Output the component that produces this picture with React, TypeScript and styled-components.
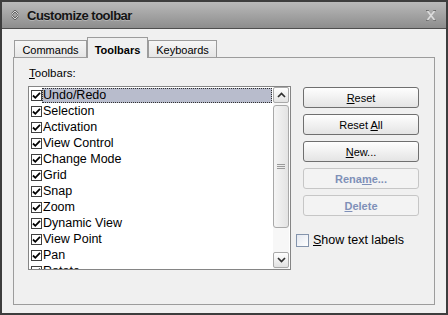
import styled, { createGlobalStyle } from "styled-components";

const GlobalStyle = createGlobalStyle`
  html, body {
    margin: 0;
    padding: 0;
    background: #f0f0f0;
  }
  body {
    font-family: "Liberation Sans", Arial, sans-serif;
    color: #000;
  }
`;

const toolbars = [
    "Undo/Redo",
    "Selection",
    "Activation",
    "View Control",
    "Change Mode",
    "Grid",
    "Snap",
    "Zoom",
    "Dynamic View",
    "View Point",
    "Pan",
    "Rotate",
];

const Window = styled.div`
    width: 448px;
    height: 315px;
    box-sizing: border-box;
    border: 2px solid #3d3d3d;
    background: #f0f0f0;
    display: flex;
    flex-direction: column;
    overflow: hidden;
`;

const TitleBar = styled.div`
    height: 26px;
    flex: none;
    display: flex;
    align-items: center;
    padding: 0 10px 0 9px;
    background: linear-gradient(#b9b9b9, #8d8d8d);
    border-bottom: 1px solid #4e4e4e;
`;

const Title = styled.span`
    flex: 1;
    margin-left: 8px;
    font-size: 13px;
    font-weight: bold;
    letter-spacing: -0.5px;
    color: #141414;
    text-shadow: 0 1px 0 rgba(255, 255, 255, 0.25);
`;

const Body = styled.div`
    flex: 1;
    display: flex;
    flex-direction: column;
    padding: 8px 11px 8px;
`;

const TabStrip = styled.div`
    height: 20px;
    display: flex;
    align-items: flex-end;
    padding-left: 1px;
`;

const Tab = styled.div<{ $active?: boolean; $width: number }>`
    width: ${(p) => p.$width}px;
    box-sizing: border-box;
    height: ${(p) => (p.$active ? 21 : 17)}px;
    margin-bottom: ${(p) => (p.$active ? -1 : 0)}px;
    position: relative;
    z-index: ${(p) => (p.$active ? 1 : 0)};
    border: 1px solid #9c9c9c;
    border-bottom: none;
    background: ${(p) =>
        p.$active ? "#f0f0f0" : "linear-gradient(#f6f6f6, #e6e6e6)"};
    font-size: 11px;
    font-weight: ${(p) => (p.$active ? "bold" : "normal")};
    display: flex;
    align-items: center;
    justify-content: center;
    padding-top: ${(p) => (p.$active ? 3 : 1)}px;
`;

const Panel = styled.div`
    flex: 1;
    border: 1px solid #9c9c9c;
    display: flex;
    align-items: flex-start;
    padding: 8px 0 0 14px;
`;

const LeftCol = styled.div`
    width: 263px;
    display: flex;
    flex-direction: column;
`;

const FieldLabel = styled.div`
    height: 14px;
    line-height: 14px;
    margin-left: 1px;
    font-size: 11.5px;
`;

const ListBox = styled.div`
    margin-top: 6px;
    height: 184px;
    box-sizing: border-box;
    border: 1px solid #858585;
    background: #fff;
    display: flex;
`;

const Items = styled.div`
    flex: 1;
    overflow: hidden;
    margin-right: 1px;
`;

const Row = styled.div`
    height: 16px;
    display: flex;
    align-items: center;
    padding-left: 2px;
    font-size: 12.5px;
`;

const ItemCheck = styled.span`
    width: 11px;
    height: 11px;
    box-sizing: border-box;
    border: 1px solid #404040;
    background: #fff;
    flex: none;
    display: flex;
    align-items: center;
    justify-content: center;
`;

const ItemText = styled.span<{ $selected?: boolean }>`
    height: 15px;
    line-height: 15px;
    box-sizing: border-box;
    padding-left: 1px;
    ${(p) =>
        p.$selected &&
        `
        flex: 1;
        background: #b8bccc;
        outline: 1px dotted #303030;
        outline-offset: -1px;
    `}
`;

const ScrollBar = styled.div`
    width: 16px;
    flex: none;
    margin-right: 1px;
    padding: 0 0 1px;
    display: flex;
    flex-direction: column;
    background: #f7f7f7;
`;

const ScrollButton = styled.div`
    height: 16px;
    box-sizing: border-box;
    border: 1px solid #a9a9a9;
    border-radius: 2px;
    background: linear-gradient(#ffffff, #e2e2e2);
    display: flex;
    align-items: center;
    justify-content: center;
`;

const Thumb = styled.div`
    margin-top: 2px;
    height: 123px;
    box-sizing: border-box;
    border: 1px solid #a9a9a9;
    border-radius: 3px;
    background: linear-gradient(90deg, #f5f5f5, #e3e3e3);
    display: flex;
    align-items: center;
    justify-content: center;
`;

const Track = styled.div`
    flex: 1;
`;

const RightCol = styled.div`
    margin-left: 5px;
    padding-top: 21px;
    display: flex;
    flex-direction: column;
    gap: 6px;
`;

const Button = styled.div<{ $disabled?: boolean }>`
    margin-left: 7px;
    width: 116px;
    height: 21px;
    box-sizing: border-box;
    border: 1px solid ${(p) => (p.$disabled ? "#c6c6c6" : "#6f6f6f")};
    border-radius: 3px;
    background: ${(p) =>
        p.$disabled ? "#f3f3f3" : "linear-gradient(#fefefe, #e4e4e4)"};
    color: ${(p) => (p.$disabled ? "#7f90b8" : "#000")};
    font-size: 11px;
    font-weight: ${(p) => (p.$disabled ? "bold" : "normal")};
    display: flex;
    align-items: center;
    justify-content: center;
`;

const CheckRow = styled.label`
    margin-top: 11px;
    display: flex;
    align-items: center;
    gap: 4px;
    font-size: 12.5px;
`;

const Box = styled.span`
    width: 13px;
    height: 13px;
    box-sizing: border-box;
    border: 1px solid #8494ac;
    background: linear-gradient(135deg, #e4e8f0, #ffffff);
`;

function Check() {
    return (
        <svg width="9" height="9" viewBox="0 0 9 9">
            <path d="M1 4.5 L3.3 6.8 L8 1.8" fill="none" stroke="#000" strokeWidth="1.8" />
        </svg>
    );
}

function Chevron({ up }: { up?: boolean }) {
    return (
        <svg width="9" height="6" viewBox="0 0 9 6">
            <path
                d={up ? "M1 5 L4.5 1.5 L8 5" : "M1 1 L4.5 4.5 L8 1"}
                fill="none"
                stroke="#303030"
                strokeWidth="1.7"
            />
        </svg>
    );
}

function Grip() {
    return (
        <svg width="8" height="7" viewBox="0 0 8 7">
            <path d="M0 1.5 H8 M0 3.5 H8 M0 5.5 H8" stroke="#9a9a9a" strokeWidth="1" />
        </svg>
    );
}

function MenuIcon() {
    return (
        <svg width="8" height="10" viewBox="0 0 8 10">
            <path d="M1 4 L4 1 L7 4 M1 6 L4 9 L7 6" fill="none" stroke="#5a5a5a" strokeWidth="2" />
            <path d="M1 4 L4 1 L7 4 M1 6 L4 9 L7 6" fill="none" stroke="#e8e8e8" strokeWidth="0.9" />
        </svg>
    );
}

function CloseIcon() {
    return (
        <svg width="10" height="11" viewBox="0 0 10 11">
            <path d="M0 0.5 H3 M7 0.5 H10 M0 10.5 H3 M7 10.5 H10" stroke="#6e6e6e" strokeWidth="1" />
            <path d="M1.5 1 L8.5 10 M8.5 1 L1.5 10" stroke="#dcdcdc" strokeWidth="1.6" />
        </svg>
    );
}

function App() {
    return (
        <>
            <GlobalStyle />
            <Window>
                <TitleBar>
                    <MenuIcon />
                    <Title>Customize toolbar</Title>
                    <CloseIcon />
                </TitleBar>
                <Body>
                    <TabStrip>
                        <Tab $width={73}>Commands</Tab>
                        <Tab $width={61} $active>Toolbars</Tab>
                        <Tab $width={69}>Keyboards</Tab>
                    </TabStrip>
                    <Panel>
                        <LeftCol>
                            <FieldLabel>
                                <u>T</u>oolbars:
                            </FieldLabel>
                            <ListBox>
                                <Items>
                                    {toolbars.map((name, i) => (
                                        <Row key={name}>
                                            <ItemCheck>
                                                <Check />
                                            </ItemCheck>
                                            <ItemText $selected={i === 0}>{name}</ItemText>
                                        </Row>
                                    ))}
                                </Items>
                                <ScrollBar>
                                    <ScrollButton>
                                        <Chevron up />
                                    </ScrollButton>
                                    <Thumb>
                                        <Grip />
                                    </Thumb>
                                    <Track />
                                    <ScrollButton>
                                        <Chevron />
                                    </ScrollButton>
                                </ScrollBar>
                            </ListBox>
                        </LeftCol>
                        <RightCol>
                            <Button>
                                <span>
                                    <u>R</u>eset
                                </span>
                            </Button>
                            <Button>
                                <span>
                                    Reset <u>A</u>ll
                                </span>
                            </Button>
                            <Button>
                                <span>
                                    <u>N</u>ew...
                                </span>
                            </Button>
                            <Button $disabled>
                                <span>
                                    Rena<u>m</u>e...
                                </span>
                            </Button>
                            <Button $disabled>
                                <span>
                                    <u>D</u>elete
                                </span>
                            </Button>
                            <CheckRow>
                                <Box />
                                <span>
                                    <u>S</u>how text labels
                                </span>
                            </CheckRow>
                        </RightCol>
                    </Panel>
                </Body>
            </Window>
        </>
    );
}

export default App;
